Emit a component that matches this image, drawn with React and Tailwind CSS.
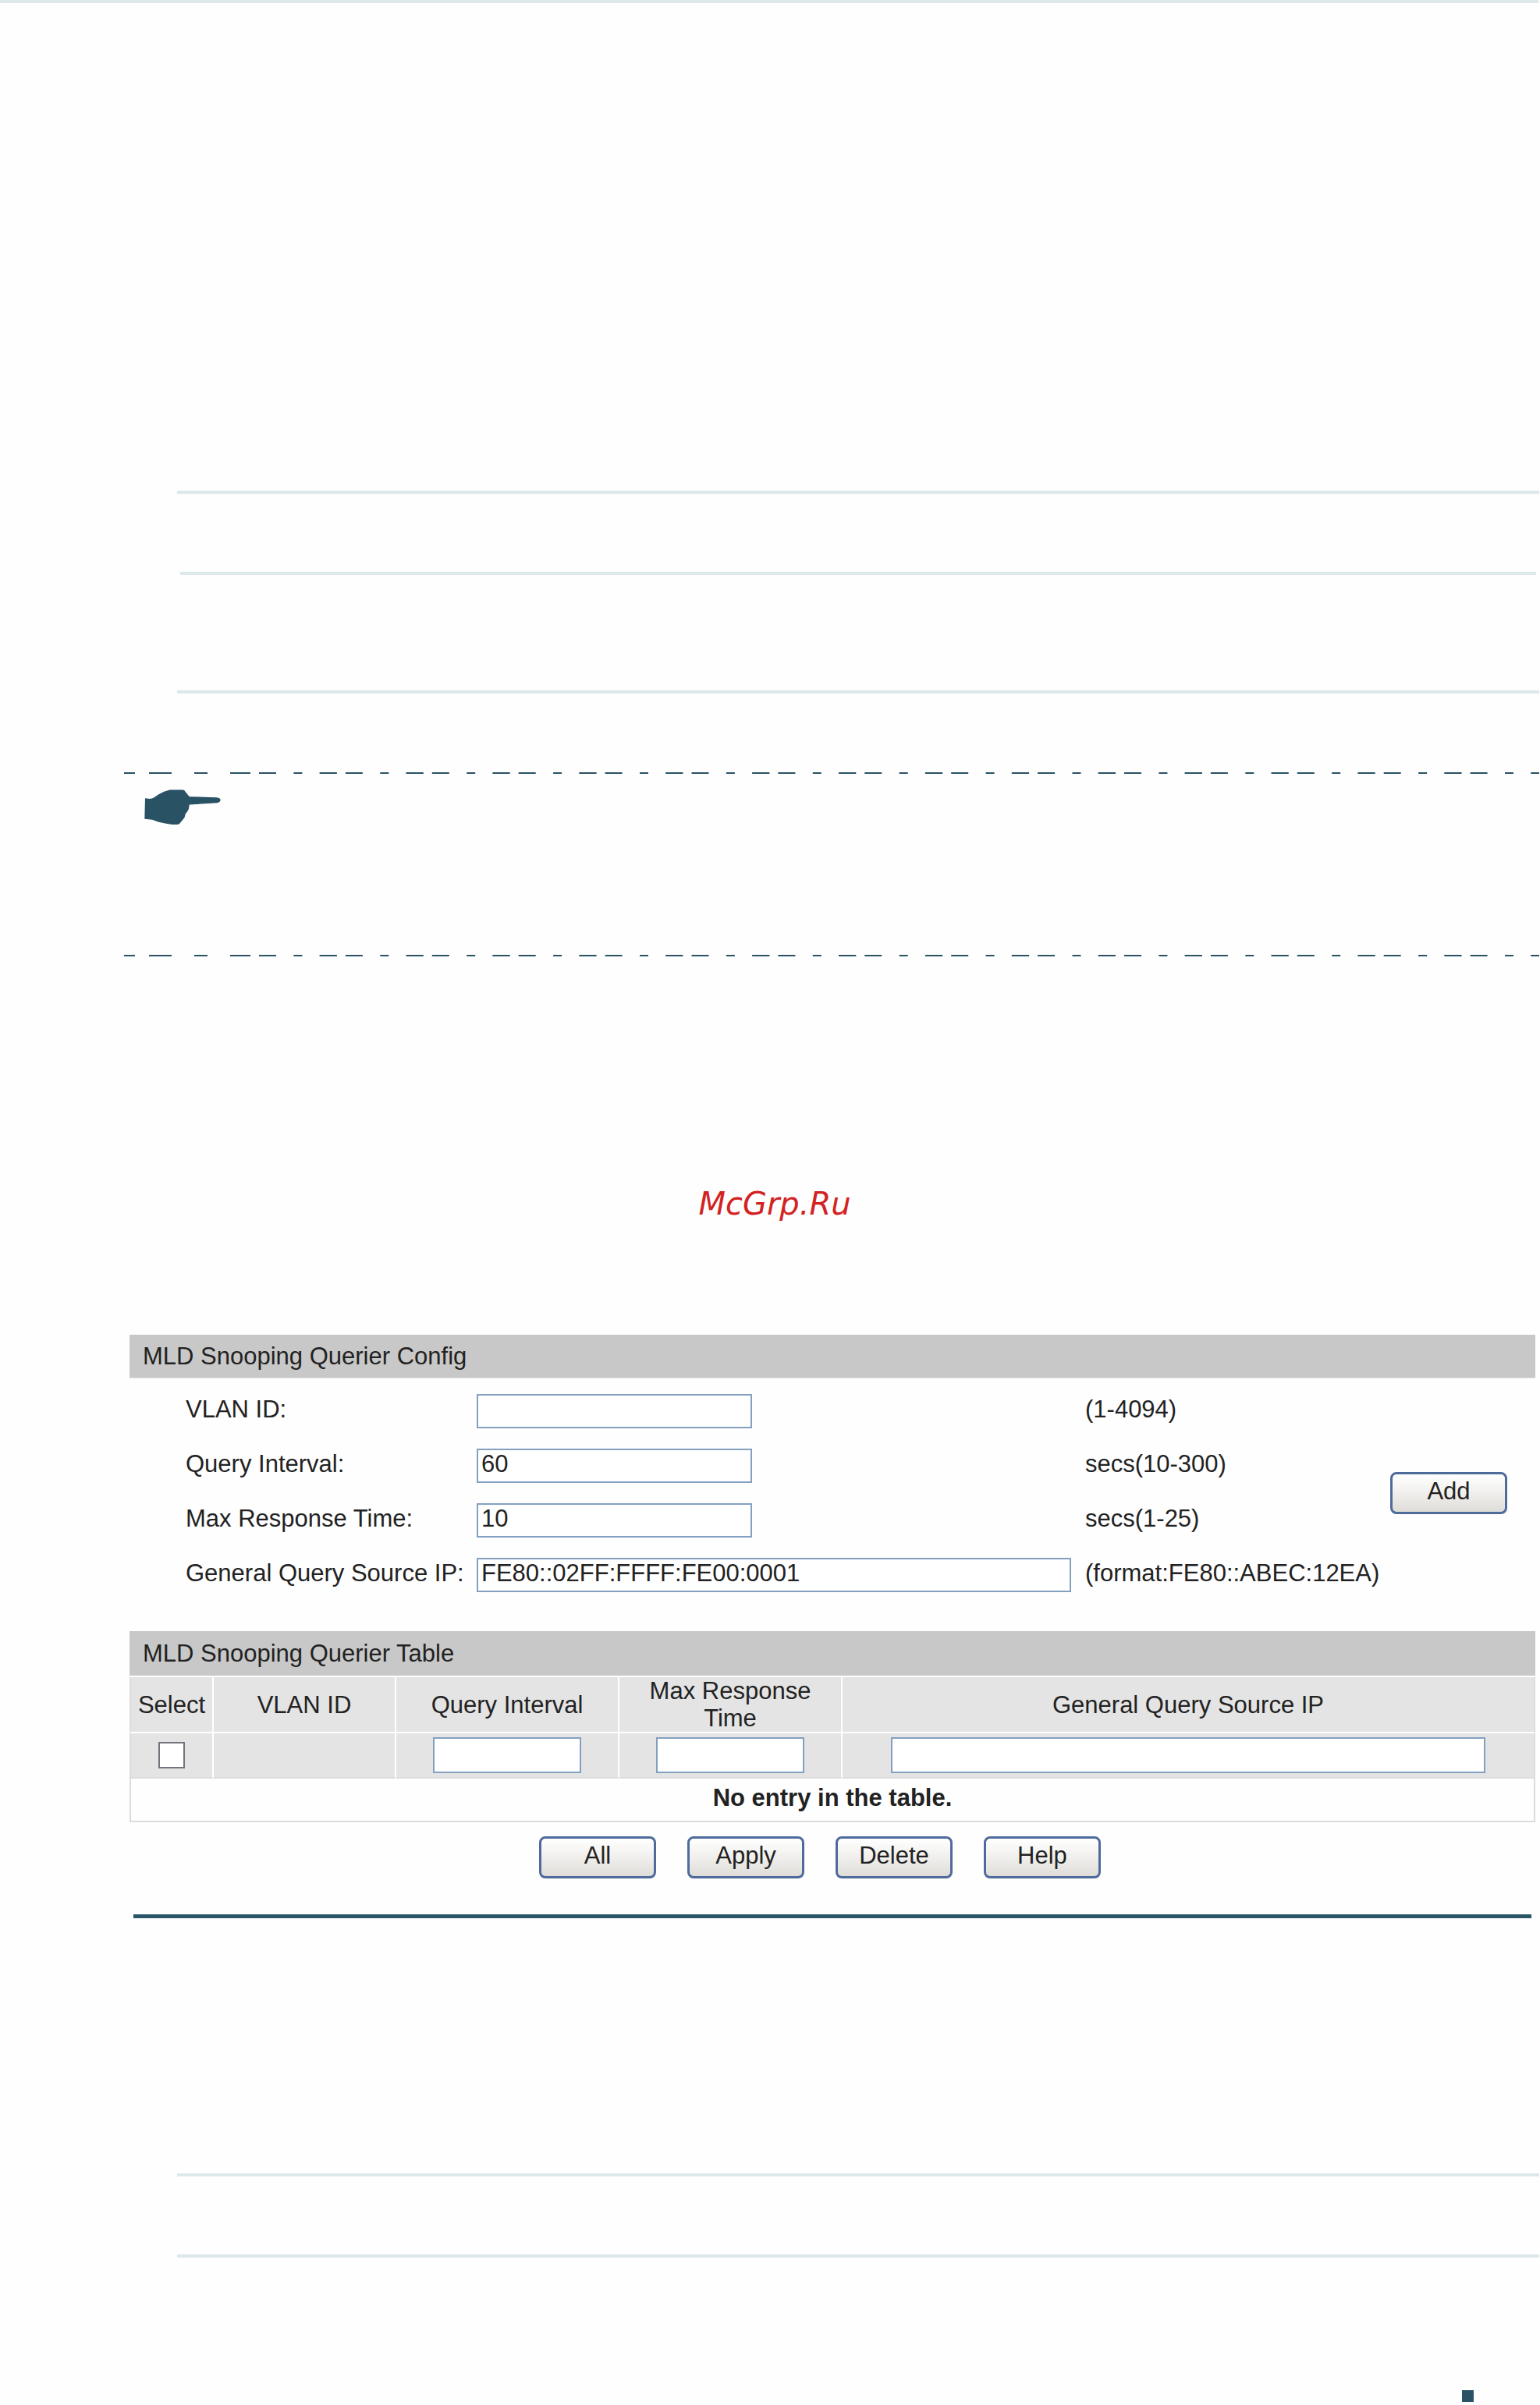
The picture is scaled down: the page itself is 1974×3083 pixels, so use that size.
import React, { useState } from "react";

const inputClass =
  "border-2 border-[#84a0c0] bg-white px-1 text-[31px] leading-9 text-[#222] outline-none";

function Button({ children, onClick }) {
  return (
    <button
      type="button"
      onClick={onClick}
      className="flex h-[54px] w-[150px] items-center justify-center rounded-lg border-[3px] border-[#4f6b9c] bg-linear-to-b from-white via-[#f0efed] to-[#deddd8] pb-1"
    >
      {children}
    </button>
  );
}

function DashedLine() {
  return (
    <svg className="block h-0.5 w-full" stroke="#2a5265" strokeWidth="2" aria-hidden="true">
      <path d="M0 1H14M32 1H61M90 1H107M136 1H162" />
      <line x1="173" y1="1" x2="100%" y2="1" strokeDasharray="22 22.4 11 22.2 22.3 11" />
    </svg>
  );
}

function HandIcon() {
  return (
    <svg viewBox="135 158 295 137" className="block h-[46px] w-[98px]" fill="#2a5265" aria-hidden="true">
      <path d="M138 191 L150 193 Q164 194 172 189 Q204 164 234 159 H284 Q291 160 294 167 L309 185 L414 188 Q429 190 429 198 Q428 207 415 209 L309 216 L306 234 Q300 245 293 253 Q292 267 284 273 L272 288 Q267 293 260 293 H242 Q214 289 190 283 L165 274 L136 271 Z" />
    </svg>
  );
}

function Rule({ className }) {
  return <hr className={`h-1 border-0 bg-[#dde8ea] ${className}`} />;
}

function App() {
  const [form, setForm] = useState({
    vlan: "",
    interval: "60",
    response: "10",
    source: "FE80::02FF:FFFF:FE00:0001",
  });
  const [selected, setSelected] = useState(false);

  const fields = [
    { id: "vlan", label: "VLAN ID:", hint: "(1-4094)", width: "w-[353px]" },
    { id: "interval", label: "Query Interval:", hint: "secs(10-300)", width: "w-[353px]" },
    { id: "response", label: "Max Response Time:", hint: "secs(1-25)", width: "w-[353px]" },
    { id: "source", label: "General Query Source IP:", hint: "(format:FE80::ABEC:12EA)", width: "w-[762px]" },
  ];

  const edgeClass =
    "border-r-2 border-b-2 bg-[#e4e4e4] first:border-l-2 first:border-l-[#dcdcdc] last:border-r-[#dcdcdc]";
  const thClass = `${edgeClass} border-r-white border-b-white px-1 leading-[35px] font-normal`;
  const tdClass = `${edgeClass} border-r-white border-b-[#dcdcdc]`;

  return (
    <div className="min-h-screen bg-[#fefefe] font-['Liberation_Sans',Arial,sans-serif] text-[31px] leading-9 text-[#222]">
      <Rule className="mr-0.5" />

      <div className="pt-[625px] pr-px">
        <Rule className="ml-[227px]" />
        <Rule className="mt-[100px] mr-1 ml-[231px]" />
        <Rule className="mt-[148px] ml-[227px]" />
      </div>

      {/* Note */}
      <div className="mt-[101px] mr-px ml-[159px]">
        <DashedLine />
        <div className="h-[232px] pt-5 pl-[26px]">
          <HandIcon />
        </div>
        <DashedLine />
      </div>

      <p className="mt-[292px] pl-3 text-center font-['DejaVu_Sans',sans-serif] text-[40px] leading-[50px] text-[#d32222] italic">
        McGrp.Ru
      </p>

      <main className="mt-[143px] mr-1.5 ml-[166px]">
        {/* Config */}
        <section>
          <h2 className="flex h-14 items-center border-b border-[#e4e4e4] bg-[#c8c8c8] pl-[17px]">
            MLD Snooping Querier Config
          </h2>
          <form className="flex items-center justify-between pt-5 pr-9 pb-[50px] pl-[72px]">
            <div className="grid grid-cols-[373px_780px_auto] gap-y-[26px]">
              {fields.map((field) => (
                <React.Fragment key={field.id}>
                  <label htmlFor={field.id} className="self-center pb-1">
                    {field.label}
                  </label>
                  <input
                    id={field.id}
                    type="text"
                    value={form[field.id]}
                    onChange={(e) => setForm({ ...form, [field.id]: e.target.value })}
                    className={`h-11 pb-1 ${inputClass} ${field.width}`}
                  />
                  <span className="self-center pb-1">{field.hint}</span>
                </React.Fragment>
              ))}
            </div>
            <Button>Add</Button>
          </form>
        </section>

        {/* Table */}
        <section>
          <h2 className="mb-0.5 flex h-[57px] items-center bg-[#c8c8c8] pl-[17px]">MLD Snooping Querier Table</h2>
          <table className="w-full table-fixed border-separate border-spacing-0 text-center">
            <colgroup>
              <col className="w-[108px]" />
              <col className="w-[234px]" />
              <col className="w-[286px]" />
              <col className="w-[286px]" />
              <col />
            </colgroup>
            <thead>
              <tr className="h-[72px]">
                <th className={thClass}>Select</th>
                <th className={thClass}>VLAN ID</th>
                <th className={thClass}>Query Interval</th>
                <th className={thClass}>Max Response Time</th>
                <th className={thClass}>General Query Source IP</th>
              </tr>
            </thead>
            <tbody>
              <tr className="h-[58px]">
                <td className={tdClass}>
                  <input
                    type="checkbox"
                    aria-label="Select"
                    checked={selected}
                    onChange={(e) => setSelected(e.target.checked)}
                    className="mx-auto block size-[34px] appearance-none border-2 border-[#73737d] bg-white checked:bg-[#84a0c0]"
                  />
                </td>
                <td className={tdClass}></td>
                <td className={tdClass}>
                  <input type="text" aria-label="Query Interval" className={`mx-auto block h-[46px] w-[190px] ${inputClass}`} />
                </td>
                <td className={tdClass}>
                  <input type="text" aria-label="Max Response Time" className={`mx-auto block h-[46px] w-[190px] ${inputClass}`} />
                </td>
                <td className={tdClass}>
                  <input type="text" aria-label="General Query Source IP" className={`mx-auto block h-[46px] w-[762px] ${inputClass}`} />
                </td>
              </tr>
              <tr className="h-14">
                <td colSpan={5} className="border-x-2 border-b-2 border-[#dcdcdc] pb-1 font-bold">
                  No entry in the table.
                </td>
              </tr>
            </tbody>
          </table>
          <div className="mt-[18px] flex justify-center gap-10 pr-8">
            <Button onClick={() => setSelected(true)}>All</Button>
            <Button>Apply</Button>
            <Button onClick={() => setSelected(false)}>Delete</Button>
            <Button>Help</Button>
          </div>
        </section>

        <hr className="mt-[46px] mr-[5px] ml-[5px] h-[5px] border-0 bg-[#2a5566]" />
      </main>

      <div className="pt-[327px] pr-px">
        <Rule className="ml-[227px]" />
        <Rule className="mt-[100px] ml-[227px]" />
      </div>

      <footer className="flex justify-end pt-[170px] pr-[85px] pb-1">
        <span className="size-[15px] bg-[#2a5265]"></span>
      </footer>
    </div>
  );
}

export default App;
